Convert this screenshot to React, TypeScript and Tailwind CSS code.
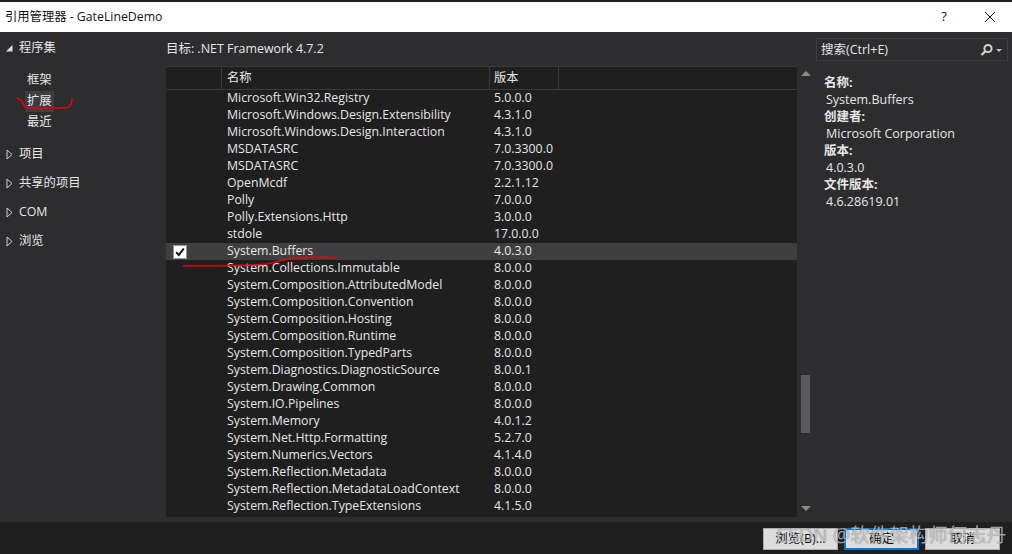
import React from "react";

const rows: [string, string][] = [
  ["Microsoft.Win32.Registry", "5.0.0.0"],
  ["Microsoft.Windows.Design.Extensibility", "4.3.1.0"],
  ["Microsoft.Windows.Design.Interaction", "4.3.1.0"],
  ["MSDATASRC", "7.0.3300.0"],
  ["MSDATASRC", "7.0.3300.0"],
  ["OpenMcdf", "2.2.1.12"],
  ["Polly", "7.0.0.0"],
  ["Polly.Extensions.Http", "3.0.0.0"],
  ["stdole", "17.0.0.0"],
  ["System.Buffers", "4.0.3.0"],
  ["System.Collections.Immutable", "8.0.0.0"],
  ["System.Composition.AttributedModel", "8.0.0.0"],
  ["System.Composition.Convention", "8.0.0.0"],
  ["System.Composition.Hosting", "8.0.0.0"],
  ["System.Composition.Runtime", "8.0.0.0"],
  ["System.Composition.TypedParts", "8.0.0.0"],
  ["System.Diagnostics.DiagnosticSource", "8.0.0.1"],
  ["System.Drawing.Common", "8.0.0.0"],
  ["System.IO.Pipelines", "8.0.0.0"],
  ["System.Memory", "4.0.1.2"],
  ["System.Net.Http.Formatting", "5.2.7.0"],
  ["System.Numerics.Vectors", "4.1.4.0"],
  ["System.Reflection.Metadata", "8.0.0.0"],
  ["System.Reflection.MetadataLoadContext", "8.0.0.0"],
  ["System.Reflection.TypeExtensions", "4.1.5.0"],
];

const font = "[font-family:'Open_Sans','Noto_Sans_CJK_SC',sans-serif]";

function Closed() {
  return (
    <svg width="7" height="11" viewBox="0 0 7 11" className="shrink-0">
      <path d="M1 1 L6 5.5 L1 10 Z" fill="none" stroke="#d0d0d0" strokeWidth="1" />
    </svg>
  );
}

function Section({ label }: { label: string }) {
  return (
    <div className="h-[29px] flex items-center pl-[6px] gap-[6px]">
      <Closed />
      <span>{label}</span>
    </div>
  );
}

function Btn({ label, primary }: { label: string; primary?: boolean }) {
  return (
    <div
      className={`w-[75px] h-[22px] flex items-center justify-center bg-[#dddddd] text-[#111111] text-[12.5px] ${
        primary ? "border-2 border-[#0078d7]" : "border border-[#adadad]"
      }`}
    >
      {label}
    </div>
  );
}

export default function App() {
  return (
    <div className={`relative w-[1012px] h-[554px] overflow-hidden flex flex-col bg-[#2d2d30] text-[#e6e6e6] text-[12.3px] ${font}`}>
      <div className="h-[2px] bg-[#1e1e1e] shrink-0" />
      <div className="h-[30px] shrink-0 bg-white text-[#111111] flex items-center pl-[5px]">
        <span>引用管理器 - GateLineDemo</span>
        <span className="ml-auto w-[16px] text-center text-[13px]">?</span>
        <svg width="12" height="12" viewBox="0 0 12 12" className="ml-[32px] mr-[16px]">
          <path d="M1 1 L11 11 M11 1 L1 11" stroke="#111111" strokeWidth="1" />
        </svg>
      </div>

      <div className="flex-1 flex min-h-0 h-[490px]">
        <div className="w-[166px] shrink-0 flex flex-col">
          <div className="h-[32px] flex items-center pl-[5px] gap-[6px]">
            <svg width="8" height="8" viewBox="0 0 8 8" className="shrink-0">
              <path d="M7.5 1 V7.5 H1 Z" fill="#e0e0e0" />
            </svg>
            <span>程序集</span>
          </div>
          <div className="pt-[6px] pl-[25px] flex flex-col items-start">
            <div className="h-[21px] flex items-center px-[2px]">框架</div>
            <div className="h-[21px] flex items-center px-[2px] bg-[#3e3e42]">扩展</div>
            <div className="h-[21px] flex items-center px-[2px]">最近</div>
          </div>
          <div className="mt-[7px] flex flex-col">
            <Section label="项目" />
            <Section label="共享的项目" />
            <Section label="COM" />
            <Section label="浏览" />
          </div>
        </div>

        <div className="w-[649px] shrink-0 flex flex-col">
          <div className="h-[34px] flex items-center text-[12.45px]">目标: .NET Framework 4.7.2</div>
          <div className="flex">
            <div className="w-[631px] h-[451px] bg-[#1f1f1f] border-t border-[#3a3a3d] overflow-hidden flex flex-col">
              <div className="h-[23px] shrink-0 flex border-b border-[#3a3a3d]">
                <div className="w-[56px] border-r border-[#3a3a3d]" />
                <div className="w-[268px] border-r border-[#3a3a3d] pl-[5px] flex items-center">名称</div>
                <div className="w-[69px] border-r border-[#3a3a3d] pl-[4px] flex items-center">版本</div>
              </div>
              {rows.map(([n, v], i) => {
                const sel = n === "System.Buffers";
                return (
                  <div key={i} className={`h-[17px] shrink-0 flex items-center ${sel ? "bg-[#3f3f41]" : ""}`}>
                    <div className="w-[57px] flex items-center pl-[7px]">
                      {sel && (
                        <div className="w-[14px] h-[14px] bg-white border border-[#999999] flex items-center justify-center">
                          <svg width="10" height="10" viewBox="0 0 10 10">
                            <path d="M1.2 5.2 L3.8 8 L8.8 1.5" fill="none" stroke="#111111" strokeWidth="2" />
                          </svg>
                        </div>
                      )}
                    </div>
                    <div className="w-[267px] pl-[4px] whitespace-nowrap">{n}</div>
                    <div className="pl-[4px]">{v}</div>
                  </div>
                );
              })}
            </div>
            <div className="w-[18px] h-[451px] relative flex flex-col items-center justify-between py-[3px]">
              <div className="w-0 h-0 border-x-[5px] border-x-transparent border-b-[5px] border-b-[#8a8a8a] mt-[2px]" />
              <div className="absolute left-[4px] top-[309px] w-[9px] h-[58px] bg-[#5a5a5c]" />
              <div className="w-0 h-0 border-x-[5px] border-x-transparent border-t-[5px] border-t-[#8a8a8a] mb-[3px]" />
            </div>
          </div>
        </div>

        <div className="flex-1 flex flex-col pt-[6px] text-[12.5px]">
          <div className="ml-[1px] mr-[4px] h-[23px] border border-[#3f3f46] flex items-center pl-[4px] pr-[4px]">
            <span className="pt-[1px]">搜索(Ctrl+E)</span>
            <svg width="24" height="14" viewBox="0 0 24 14" className="ml-auto">
              <circle cx="9" cy="5.5" r="3.6" fill="none" stroke="#d0d0d0" strokeWidth="2" />
              <path d="M6.5 8 L2.5 12" stroke="#d0d0d0" strokeWidth="2.4" />
              <path d="M17 6 H23 L20 9 Z" fill="#c0c0c0" />
            </svg>
          </div>
          <div className="pl-[9px] pt-[13px] leading-[17px]">
            <div className="font-bold">名称:</div>
            <div className="pl-[2px]">System.Buffers</div>
            <div className="font-bold">创建者:</div>
            <div className="pl-[2px]">Microsoft Corporation</div>
            <div className="font-bold">版本:</div>
            <div className="pl-[2px]">4.0.3.0</div>
            <div className="font-bold">文件版本:</div>
            <div className="pl-[2px]">4.6.28619.01</div>
          </div>
        </div>
      </div>

      <div className="h-[32px] shrink-0 bg-[#1f1f1f] flex items-start justify-end pt-[6px] pr-[12px] gap-[6px]">
        <Btn label="浏览(B)..." />
        <Btn label="确定" primary />
        <Btn label="取消" />
      </div>

      <div className="absolute left-[776px] top-[521px] text-[19.5px] leading-[27px] text-white/60 [text-shadow:0_0_1px_rgba(0,0,0,0.6)] whitespace-nowrap pointer-events-none">
        CSDN @软件架构师何志丹
      </div>

      <svg className="absolute left-0 top-0 pointer-events-none" width="1012" height="554" viewBox="0 0 1012 554">
        <path d="M16.5 98 C19 99 21 99.5 22 101 C23 104 24 107 27 107.5 C38 108.5 56 108.5 67 107.5 C71 107 72 103 72 98" fill="none" stroke="#e8000b" strokeWidth="1.6" />
        <path d="M183 266 C210 266 240 266 267 264 C280 261 285 259 295 258 C310 257 325 257 336 257.5" fill="none" stroke="#e8000b" strokeWidth="1.5" />
      </svg>
    </div>
  );
}
